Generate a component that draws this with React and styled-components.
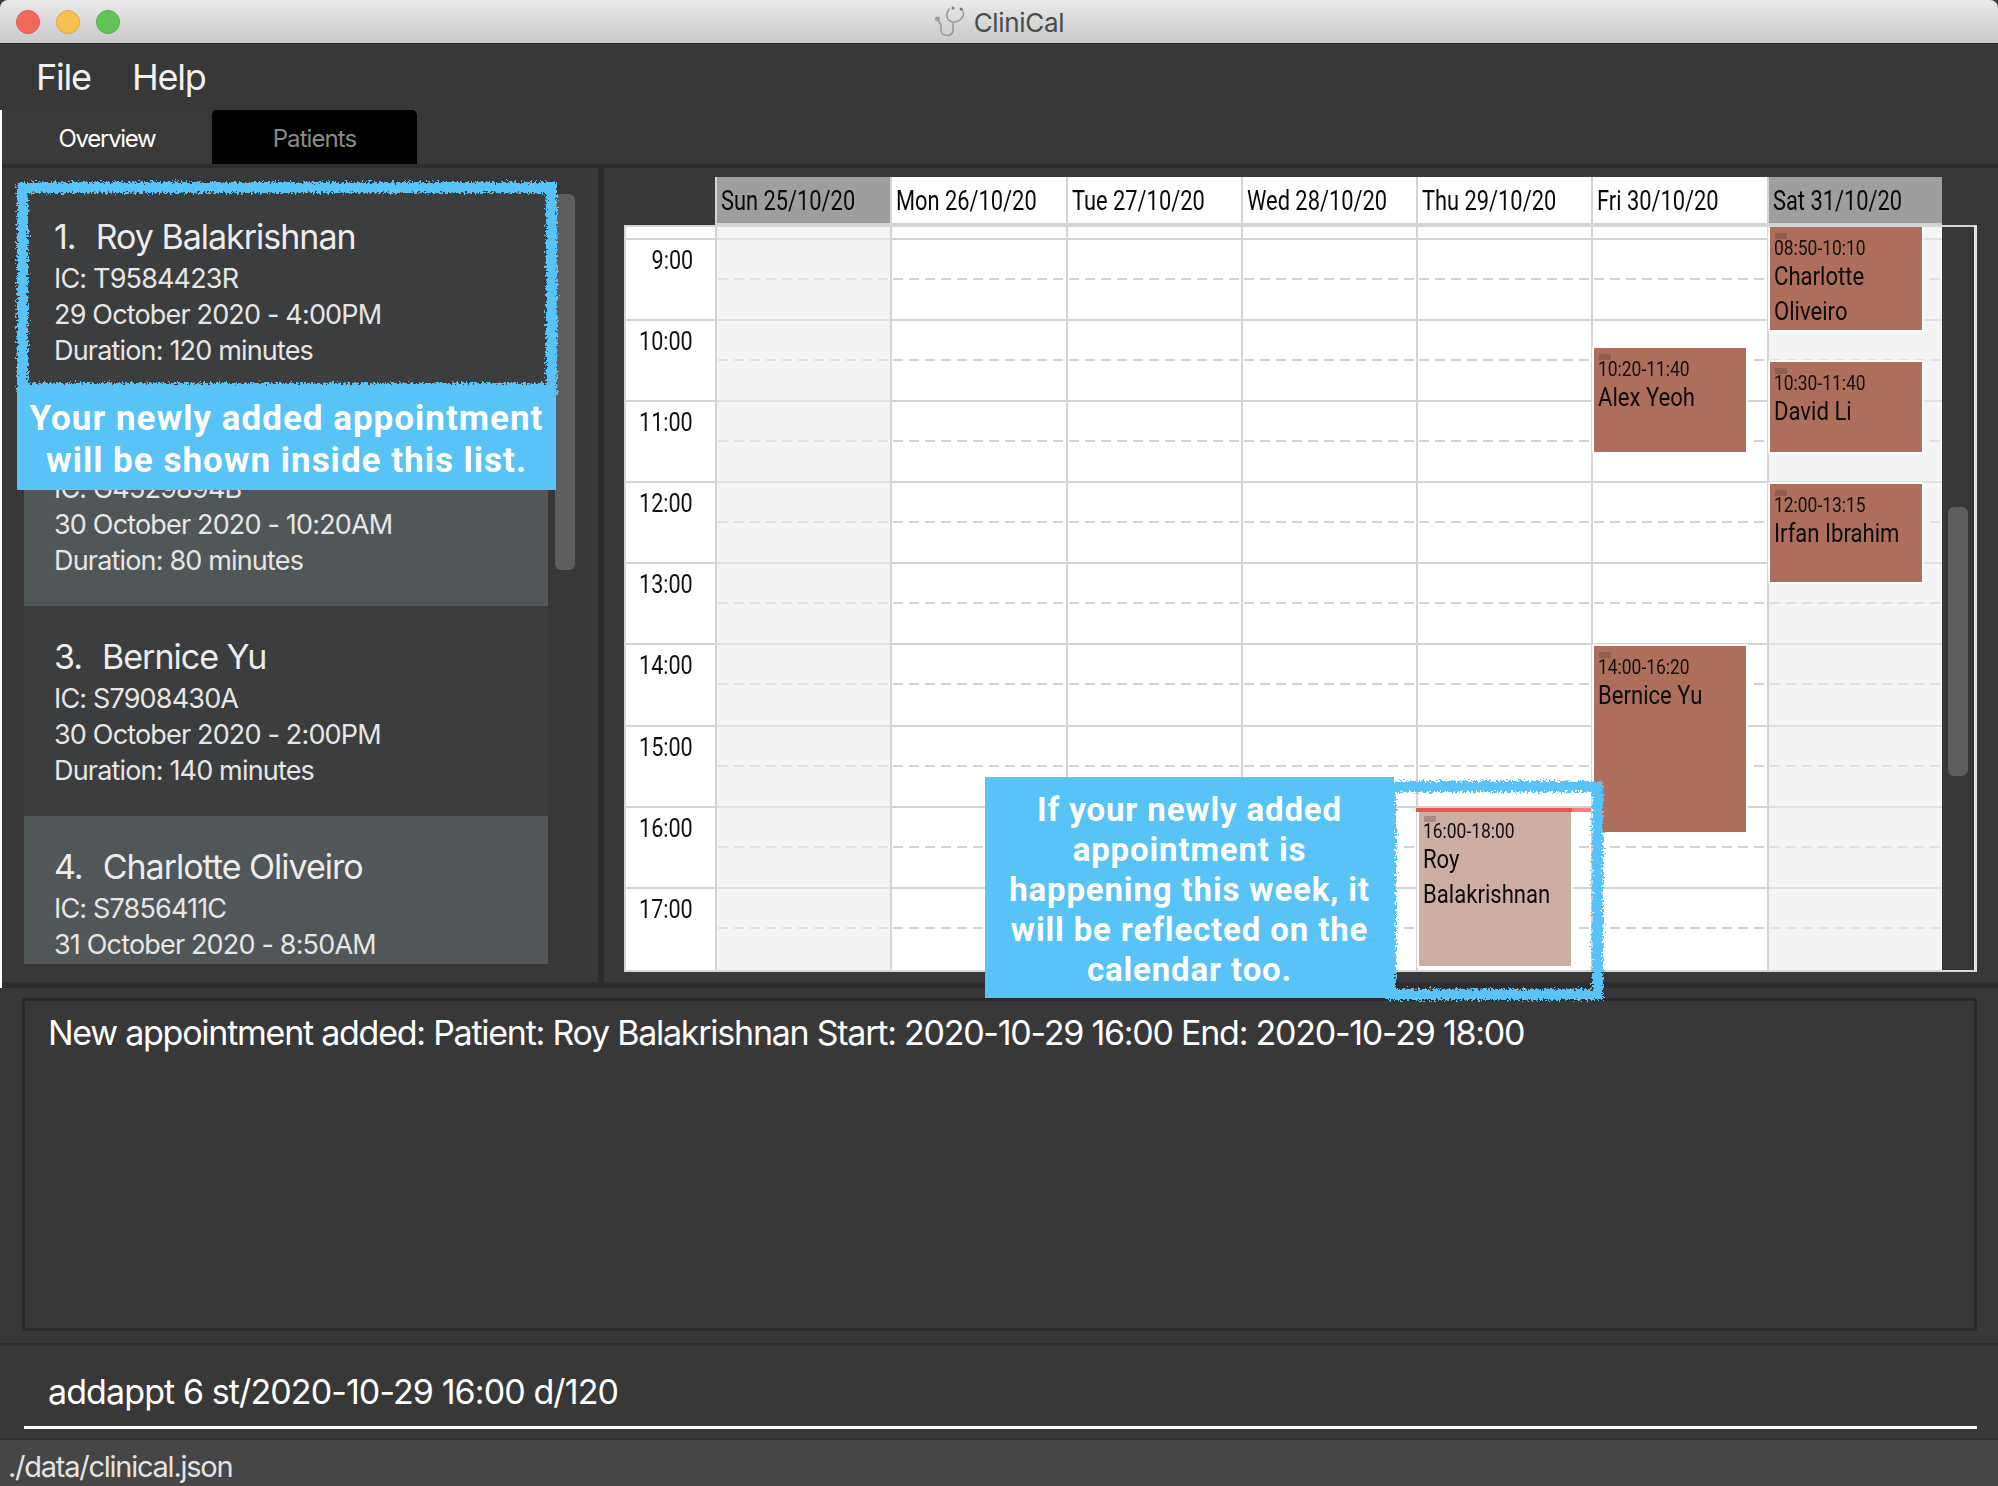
import React from 'react'
import styled, { createGlobalStyle } from 'styled-components'

const patients = [
  { name: 'Roy Balakrishnan', ic: 'T9584423R', date: '29 October 2020 - 4:00PM', duration: 120 },
  { name: 'Alex Yeoh', ic: 'G4529894B', date: '30 October 2020 - 10:20AM', duration: 80 },
  { name: 'Bernice Yu', ic: 'S7908430A', date: '30 October 2020 - 2:00PM', duration: 140 },
  { name: 'Charlotte Oliveiro', ic: 'S7856411C', date: '31 October 2020 - 8:50AM', duration: 80 },
]

const hours = ['9:00', '10:00', '11:00', '12:00', '13:00', '14:00', '15:00', '16:00', '17:00']

const days = [
  { label: 'Sun 25/10/20', weekend: true, events: [] },
  { label: 'Mon 26/10/20', events: [] },
  { label: 'Tue 27/10/20', events: [] },
  { label: 'Wed 28/10/20', events: [] },
  {
    label: 'Thu 29/10/20',
    events: [{ top: 583, height: 156, time: '16:00-18:00', lines: ['Roy', 'Balakrishnan'], fresh: true }],
  },
  {
    label: 'Fri 30/10/20',
    events: [
      { top: 121, height: 104, time: '10:20-11:40', lines: ['Alex Yeoh'] },
      { top: 419, height: 186, time: '14:00-16:20', lines: ['Bernice Yu'] },
    ],
  },
  {
    label: 'Sat 31/10/20',
    weekend: true,
    events: [
      { top: 0, height: 103, time: '08:50-10:10', lines: ['Charlotte', 'Oliveiro'] },
      { top: 135, height: 90, time: '10:30-11:40', lines: ['David Li'] },
      { top: 257, height: 98, time: '12:00-13:15', lines: ['Irfan Ibrahim'] },
    ],
  },
]

const StethoscopeIcon = () => (
  <TitleIcon viewBox="0 0 32 32" fill="none" stroke="#979797" strokeWidth="1.5" strokeLinecap="round">
    <path d="M15 3 C12 7 12 13 16 15 C20 18 27 15 29 10 C30 7 29 4 27 3" />
    <path d="M19 17 L19 24 C19 31 8 31 7 25 L7 19 L4 14" />
    <circle cx="3.5" cy="13" r="2.5" fill="#a0a0a0" stroke="none" />
    <circle cx="19" cy="2" r="1.5" fill="#777" stroke="none" />
    <circle cx="27" cy="3" r="1.5" fill="#777" stroke="none" />
  </TitleIcon>
)

const App = () => {
  return (
    <Page>
      <GlobalStyle />
      <svg width="0" height="0" style={{ position: 'absolute' }}>
        <filter id="rough" x="-5%" y="-5%" width="110%" height="110%">
          <feTurbulence type="fractalNoise" baseFrequency="0.45" numOctaves="2" seed="4" />
          <feDisplacementMap in="SourceGraphic" scale="9" />
        </filter>
      </svg>

      <TitleBar>
        <Lights>
          <Light $color="#f2695c" $edge="#e0584c" />
          <Light $color="#f8c04f" $edge="#e0a83f" />
          <Light $color="#61c454" $edge="#52ad47" />
        </Lights>
        <TitleGroup>
          <StethoscopeIcon />
          <TitleText>CliniCal</TitleText>
        </TitleGroup>
      </TitleBar>

      <MenuBar>
        <MenuItem>File</MenuItem>
        <MenuItem>Help</MenuItem>
      </MenuBar>

      <Middle>
        <TabBar>
          <Tab>Overview</Tab>
          <Tab $dark>Patients</Tab>
        </TabBar>

        <Content>
          <ListPanel>
            <List>
              {patients.map((p, i) => (
                <Row key={p.name} $even={i % 2 === 1}>
                  <RowName>
                    <RowIndex>{i + 1}.</RowIndex>
                    {p.name}
                  </RowName>
                  <RowLine>IC: {p.ic}</RowLine>
                  <RowLine>{p.date}</RowLine>
                  <RowLine>Duration: {p.duration} minutes</RowLine>
                </Row>
              ))}
            </List>
            <ListThumb />
          </ListPanel>

          <CalendarPanel>
            <HeaderRow>
              {days.map((d) => (
                <HeaderCell key={d.label} $weekend={d.weekend}>
                  <Narrow $scale={0.78}>{d.label}</Narrow>
                </HeaderCell>
              ))}
            </HeaderRow>
            <CalendarBody>
              <TimeColumn>
                <TopStub />
                {hours.map((h) => (
                  <TimeCell key={h}>
                    <Narrow $right $scale={0.83}>{h}</Narrow>
                  </TimeCell>
                ))}
              </TimeColumn>
              {days.map((d) => (
                <DayColumn key={d.label} $weekend={d.weekend}>
                  <TopStub />
                  {hours.map((h) => (
                    <HourCell key={h} $weekend={d.weekend} />
                  ))}
                  {d.events.map((e) => (
                    <EventCard key={e.time} $fresh={e.fresh} style={{ top: e.top, height: e.height }}>
                      <EventTab $fresh={e.fresh} />
                      <EventTime>
                        <Narrow $scale={0.83}>{e.time}</Narrow>
                      </EventTime>
                      {e.lines.map((l) => (
                        <EventName key={l}>
                          <Narrow $scale={0.85}>{l}</Narrow>
                        </EventName>
                      ))}
                    </EventCard>
                  ))}
                  {d.events.some((e) => e.fresh) && <NowLine />}
                </DayColumn>
              ))}
              <CalendarGutter>
                <CalendarThumb />
              </CalendarGutter>
            </CalendarBody>
          </CalendarPanel>
        </Content>
      </Middle>

      <ResultPanel>
        <ResultBox>New appointment added: Patient: Roy Balakrishnan Start: 2020-10-29 16:00 End: 2020-10-29 18:00</ResultBox>
      </ResultPanel>

      <CommandPanel>
        <CommandInput>addappt 6 st/2020-10-29 16:00 d/120</CommandInput>
      </CommandPanel>

      <StatusBar>./data/clinical.json</StatusBar>

      <ListHighlight />
      <ListCallout>
        Your newly added appointment
        <br />
        will be shown inside this list.
      </ListCallout>
      <CalendarHighlight />
      <CalendarCallout>
        If your newly added
        <br />
        appointment is
        <br />
        happening this week, it
        <br />
        will be reflected on the
        <br />
        calendar too.
      </CalendarCallout>
    </Page>
  )
}

export default App

const GlobalStyle = createGlobalStyle`
  html, body {
    margin: 0;
    padding: 0;
    background: #383838;
  }
  * {
    box-sizing: border-box;
  }
`

const Page = styled.div`
  position: relative;
  width: 1998px;
  height: 1486px;
  overflow: hidden;
  background: #383838;
  font-family: Inter, "Liberation Sans", sans-serif;
  display: flex;
  flex-direction: column;
`

const TitleBar = styled.div`
  height: 44px;
  flex: none;
  display: grid;
  grid-template-columns: 1fr auto 1fr;
  align-items: center;
  background: linear-gradient(#e9e9e9, #c9c9c9);
  border-bottom: 1px solid #2c2c2c;
  border-radius: 8px 8px 0 0;
`

const Lights = styled.div`
  display: flex;
  gap: 16px;
  padding-left: 16px;
`

const Light = styled.div`
  width: 24px;
  height: 24px;
  border-radius: 50%;
  background: ${(p) => p.$color};
  border: 1px solid ${(p) => p.$edge};
`

const TitleGroup = styled.div`
  display: flex;
  align-items: center;
  gap: 8px;
`

const TitleIcon = styled.svg`
  width: 32px;
  height: 32px;
`

const TitleText = styled.div`
  font-size: 26px;
  line-height: 30px;
  margin-top: 2px;
  color: #4a4a4a;
  letter-spacing: -0.3px;
`

const MenuBar = styled.div`
  height: 66px;
  flex: none;
  display: flex;
  align-items: center;
  gap: 41px;
  padding-left: 36px;
  background: #383838;
`

const MenuItem = styled.div`
  font-size: 36px;
  letter-spacing: -1.2px;
  color: #f0f0f0;
`

const Middle = styled.div`
  flex: none;
  height: 878px;
  border-left: 2px solid #fff;
  display: flex;
  flex-direction: column;
`

const TabBar = styled.div`
  height: 58px;
  flex: none;
  display: flex;
  gap: 5px;
  border-bottom: 4px solid #2d2d2d;
`

const Tab = styled.div`
  width: 205px;
  height: 54px;
  display: flex;
  align-items: center;
  justify-content: center;
  padding: 2px 0 0 ${(p) => (p.$dark ? '0' : '5px')};
  font-size: 24px;
  letter-spacing: ${(p) => (p.$dark ? '-0.9px' : '-1.3px')};
  border-radius: 5px 5px 0 0;
  background: ${(p) => (p.$dark ? '#000' : '#3a3a3a')};
  color: ${(p) => (p.$dark ? '#8a8a8a' : '#fff')};
`

const Content = styled.div`
  flex: 1;
  min-height: 0;
  display: flex;
  border-bottom: 6px solid #2d2d2d;
`

const ListPanel = styled.div`
  width: 602px;
  flex: none;
  display: flex;
  align-items: flex-start;
  padding: 18px 0 18px 22px;
  border-right: 6px solid #2d2d2d;
`

const List = styled.div`
  width: 524px;
  height: 100%;
  flex: none;
  overflow: hidden;
`

const Row = styled.div`
  height: 210px;
  padding: 29px 0 0 30px;
  background: ${(p) => (p.$even ? '#515658' : '#3c3d3f')};
  color: #e6e6e6;
`

const RowName = styled.div`
  font-size: 34px;
  line-height: 44px;
  margin-bottom: 2px;
  letter-spacing: -1px;
  color: #ececec;
`

const RowIndex = styled.span`
  margin-right: 20px;
`

const RowLine = styled.div`
  font-size: 27px;
  line-height: 36px;
  letter-spacing: -0.83px;
`

const ListThumb = styled.div`
  width: 20px;
  height: 376px;
  flex: none;
  margin: 8px 0 0 7px;
  border-radius: 6px;
  background: #5e5e5e;
`

const CalendarPanel = styled.div`
  flex: 1;
  min-width: 0;
  padding: 9px 0 0 20px;
`

const HeaderRow = styled.div`
  display: flex;
  height: 48px;
  padding-left: 91px;
`

const Narrow = styled.span`
  display: inline-block;
  white-space: nowrap;
  font-family: Roboto, "Liberation Sans", sans-serif;
  transform: scaleX(${(p) => p.$scale});
  transform-origin: ${(p) => (p.$right ? 'right' : 'left')} center;
`

const HeaderCell = styled.div`
  width: 175.3px;
  flex: none;
  display: flex;
  align-items: center;
  padding-left: 4px;
  font-size: 28px;
  color: #0a0a0a;
  background: ${(p) => (p.$weekend ? '#9e9e9e' : '#fff')};
  border-left: 2px solid #d4d4d4;
  border-bottom: 2px solid #d4d4d4;
`

const CalendarBody = styled.div`
  display: flex;
  width: 1353px;
  height: 747px;
  border: 2px solid #d6d6d6;
  border-right-color: #e4e4e4;
  border-right-width: 3px;
  overflow: hidden;
`

const TopStub = styled.div`
  height: 11px;
`

const TimeColumn = styled.div`
  width: 89px;
  flex: none;
  background: #fff;
`

const TimeCell = styled.div`
  height: 81.1px;
  padding: 5px 22px 0 0;
  text-align: right;
  font-size: 26px;
  line-height: 30px;
  color: #111;
  border-top: 2px solid #d4d4d4;
`

const DayColumn = styled.div`
  position: relative;
  width: 175.3px;
  flex: none;
  border-left: 2px solid #d4d4d4;
  background: ${(p) => (p.$weekend ? '#f4f4f4' : '#fff')};
`

const HourCell = styled.div`
  height: 81.1px;
  border-top: 2px solid ${(p) => (p.$weekend ? '#e0e0e0' : '#d4d4d4')};
  background: linear-gradient(90deg, ${(p) => (p.$weekend ? '#e0e0e0' : '#d4d4d4')} 10px, transparent 10px) 1px 38px / 16px 2px repeat-x;
`

const EventCard = styled.div`
  position: absolute;
  left: 1px;
  width: 152px;
  padding-left: 4px;
  background: ${(p) => (p.$fresh ? '#cdaea2' : '#ad6f5c')};
  outline: 2px solid rgba(255, 255, 255, 0.85);
  overflow: hidden;
`

const EventTab = styled.div`
  width: 12px;
  height: 6px;
  margin: 6px 0 -2px 1px;
  background: ${(p) => (p.$fresh ? '#a58b82' : '#8f5f50')};
`

const EventTime = styled.div`
  height: 21px;
  font-size: 21px;
  line-height: 22px;
  color: #111;
`

const EventName = styled.div`
  height: 35px;
  font-size: 26px;
  line-height: 35px;
  color: #0c0c0c;
`

const NowLine = styled.div`
  position: absolute;
  top: 581px;
  left: -2px;
  width: 175px;
  height: 4px;
  background: linear-gradient(90deg, #ef5350 156px, #ff7c7c 156px);
`

const CalendarGutter = styled.div`
  flex: 1;
  background: #383838;
  padding: 280px 6px 0 6px;
`

const CalendarThumb = styled.div`
  width: 20px;
  height: 269px;
  border-radius: 6px;
  background: #5e5e5e;
`

const ResultPanel = styled.div`
  height: 358px;
  flex: none;
  padding: 10px 21px 12px 22px;
  border-bottom: 3px solid #2d2d2d;
`

const ResultBox = styled.div`
  height: 333px;
  padding: 11px 0 0 23px;
  border: 3px solid #2b2b2b;
  font-size: 34px;
  line-height: 42px;
  letter-spacing: -1.25px;
  color: #fff;
  white-space: nowrap;
`

const CommandPanel = styled.div`
  height: 94px;
  flex: none;
  padding: 0 21px 0 24px;
  border-bottom: 2px solid #2d2d2d;
`

const CommandInput = styled.div`
  height: 83px;
  display: flex;
  align-items: flex-end;
  padding: 0 0 13px 24px;
  border-bottom: 3px solid #fff;
  font-size: 34px;
  line-height: 42px;
  letter-spacing: -0.9px;
  color: #fff;
`

const StatusBar = styled.div`
  flex: 1;
  display: flex;
  align-items: center;
  padding: 6px 0 0 8px;
  background: #464646;
  font-size: 29px;
  letter-spacing: -1.25px;
  color: #e4e4e4;
`

const ListHighlight = styled.div`
  position: absolute;
  left: 17px;
  top: 182px;
  width: 540px;
  height: 212px;
  border: 11px solid #58c3f6;
  filter: url(#rough);
`

const ListCallout = styled.div`
  position: absolute;
  left: 17px;
  top: 388px;
  width: 539px;
  height: 102px;
  padding-top: 10px;
  background: #58c3f6;
  color: #fff;
  text-align: center;
  font-family: Roboto, "Liberation Sans", sans-serif;
  font-weight: 700;
  font-size: 35px;
  line-height: 42px;
  letter-spacing: 1px;
  white-space: nowrap;
`

const CalendarHighlight = styled.div`
  position: absolute;
  left: 1385px;
  top: 781px;
  width: 218px;
  height: 219px;
  border: 11px solid #58c3f6;
  filter: url(#rough);
`

const CalendarCallout = styled.div`
  position: absolute;
  left: 985px;
  top: 777px;
  width: 409px;
  height: 221px;
  padding-top: 13px;
  background: #58c3f6;
  color: #fff;
  text-align: center;
  font-family: Roboto, "Liberation Sans", sans-serif;
  font-weight: 700;
  font-size: 33px;
  line-height: 40px;
  letter-spacing: 0.85px;
`
